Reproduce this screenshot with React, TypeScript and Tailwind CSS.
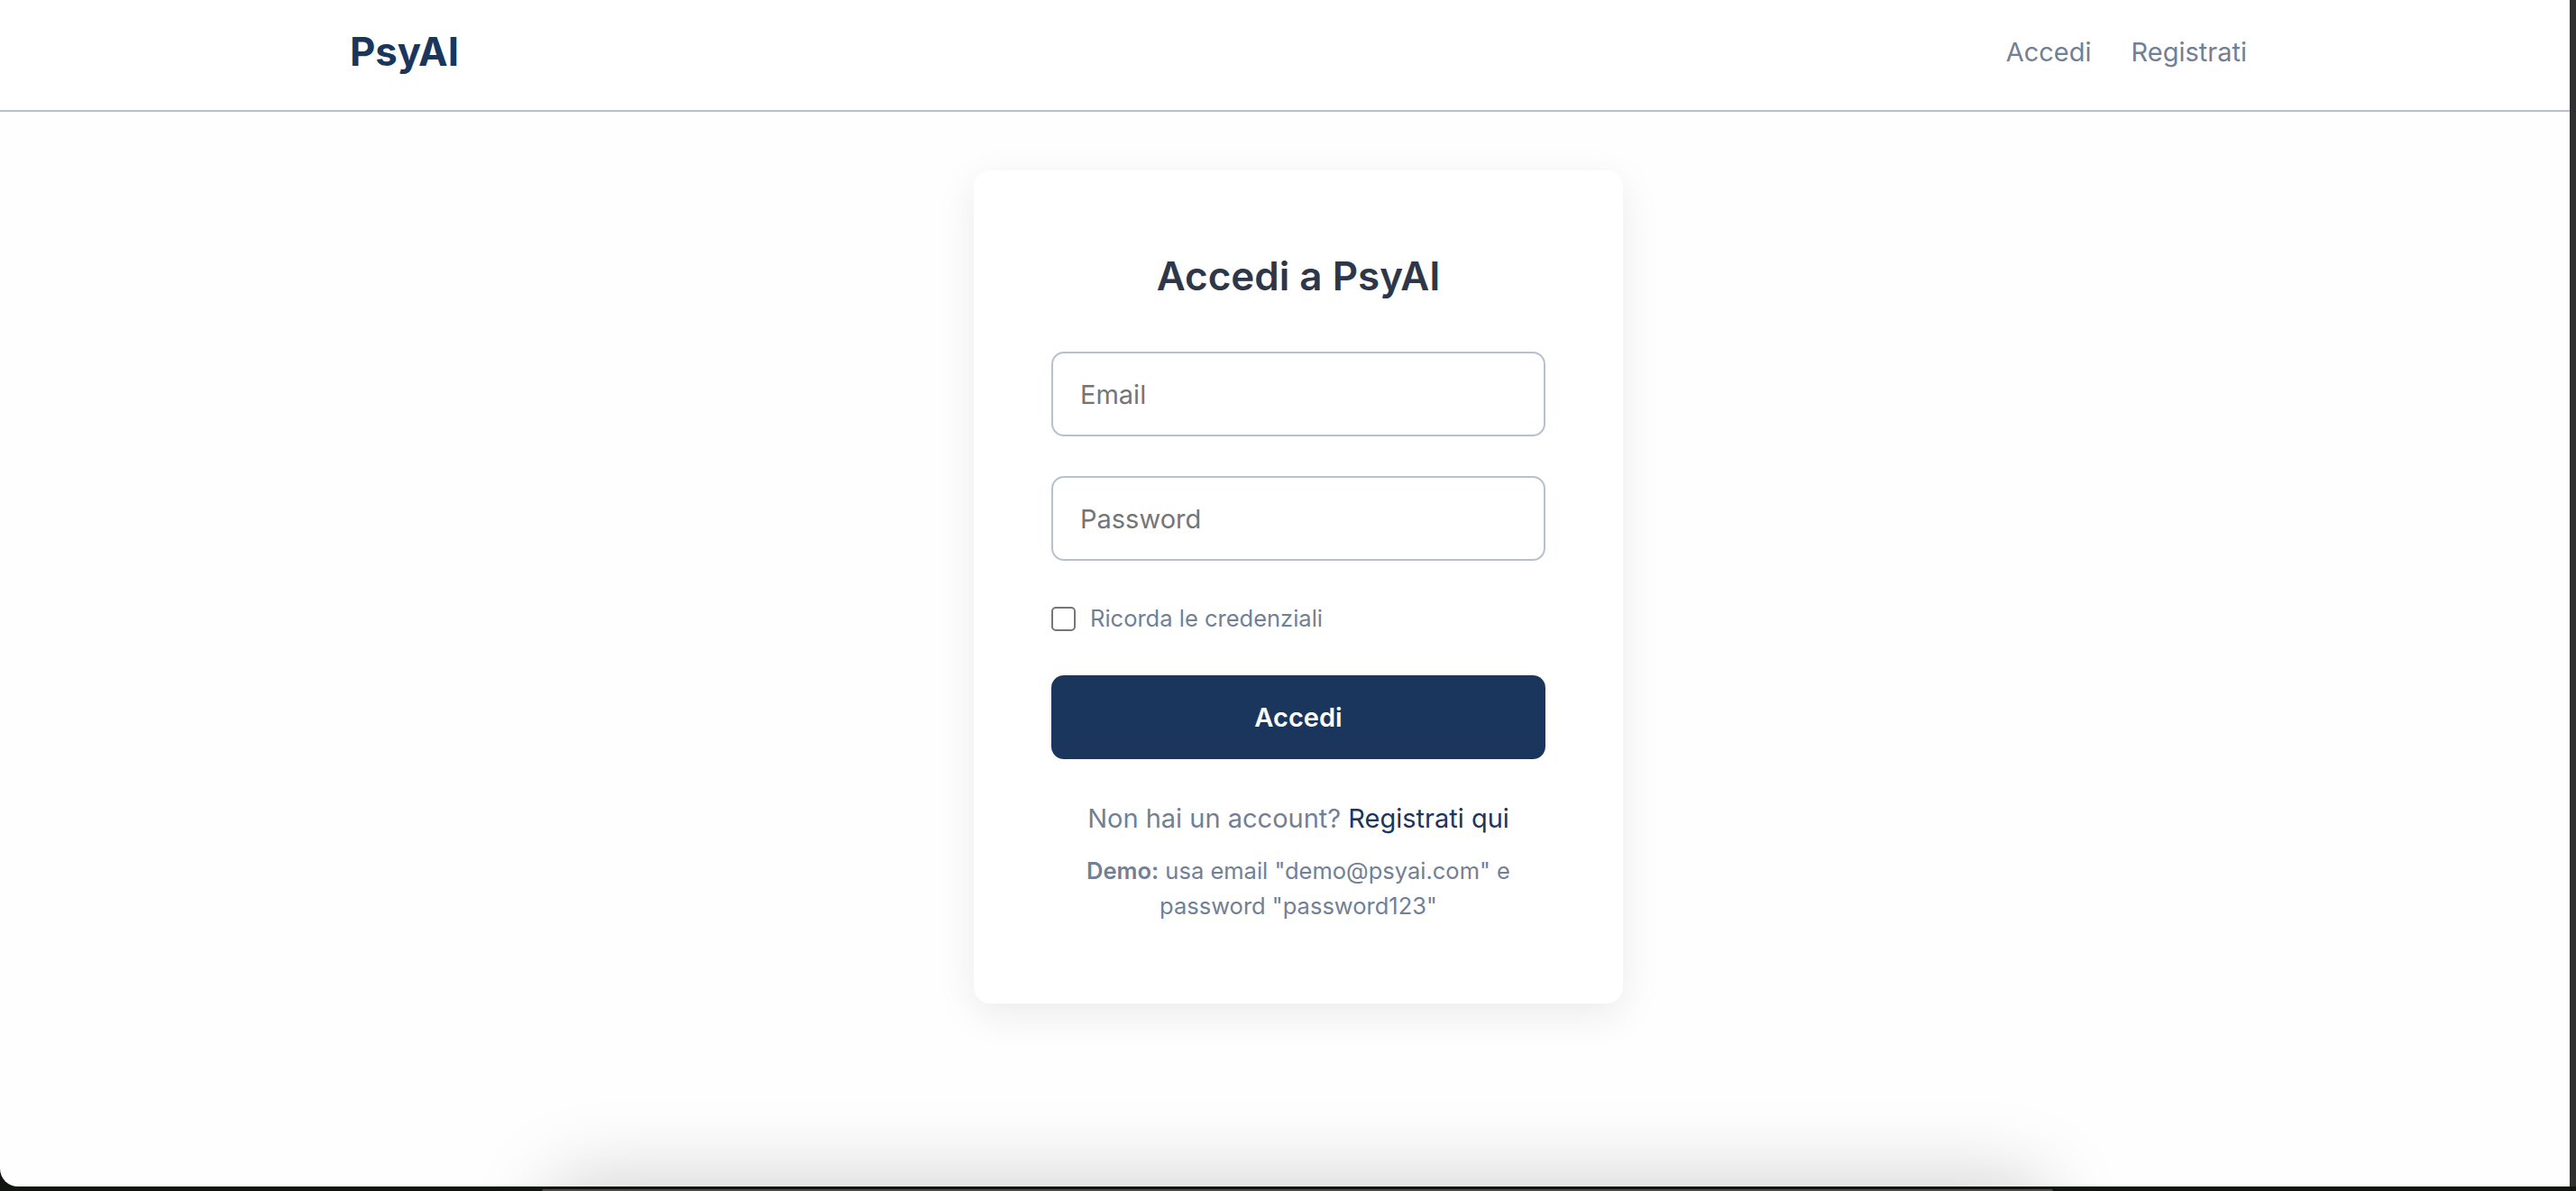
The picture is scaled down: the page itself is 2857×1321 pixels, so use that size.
import React from "react";

export default function App() {
  return (
    <div
      className="w-[2857px] h-[1321px] bg-[#121412] flex flex-col overflow-hidden"
      style={{ fontFamily: "Inter, 'Noto Sans', sans-serif" }}
    >
      <div className="flex h-[1316px]">
        <div className="relative flex-1 bg-[#fefefe] rounded-bl-[20px] overflow-hidden">
          {/* Header */}
          <header className="h-[124px] bg-white border-b-2 border-[#b6c1d0]">
            <div className="h-[122px] pl-[30px] pb-[7px] flex">
              <div className="mx-auto w-[2104px] flex items-center justify-between">
                <span className="text-[43.7px] leading-[58px] font-bold text-[#1a365d]">PsyAI</span>
                <nav className="flex items-center gap-[44px] text-[29px] leading-[44px] text-[#718096]">
                  <a>Accedi</a>
                  <a>Registrati</a>
                </nav>
              </div>
            </div>
          </header>

          {/* Main */}
          <main className="pl-[30px] pt-[65px] flex">
            <div className="mx-auto w-[720px] bg-white rounded-[18px] shadow-[0_12px_45px_rgba(0,0,0,0.08)] px-[86px] pt-[88px] pb-[89px] flex flex-col">
              <h1 className="text-center text-[44px] leading-[58px] font-semibold text-[#2d3748]">
                Accedi a PsyAI
              </h1>
              <input
                className="mt-[55px] h-[94px] w-full rounded-[14px] border-2 border-[#b6c1d0] bg-white px-[30px] text-[29px] text-[#2d3748] placeholder:text-[#757575] outline-none"
                placeholder="Email"
                type="email"
              />
              <input
                className="mt-[44px] h-[94px] w-full rounded-[14px] border-2 border-[#b6c1d0] bg-white px-[30px] text-[29px] text-[#2d3748] placeholder:text-[#757575] outline-none"
                placeholder="Password"
                type="password"
              />
              <label className="mt-[46px] h-[36px] flex items-center gap-[16px]">
                <input
                  type="checkbox"
                  className="appearance-none w-[27px] h-[27px] border-2 border-[#767676] rounded-[5px] bg-white"
                />
                <span className="text-[25.5px] leading-[36px] text-[#718096]">Ricorda le credenziali</span>
              </label>
              <button className="mt-[45px] h-[93px] w-full rounded-[14px] bg-[#1b365d] text-white text-[29px] font-semibold flex items-center justify-center">
                Accedi
              </button>
              <p className="mt-[44px] text-center text-[29px] leading-[44px] text-[#718096]">
                Non hai un account? <a className="text-[#1a365d]">Registrati qui</a>
              </p>
              <p className="mt-[16px] text-center text-[25.5px] leading-[39px] text-[#718096]">
                <span className="font-semibold">Demo:</span> usa email "demo@psyai.com" e password "password123"
              </p>
            </div>
          </main>

          {/* shadow cast from below */}
          <div className="pointer-events-none absolute left-[600px] w-[1680px] top-[1300px] h-[120px] bg-black/15 blur-[40px] rounded-[60px]" />
        </div>
        <div className="w-[7px] bg-[#303030]" />
      </div>
      <div className="h-[5px] flex items-end">
        <div className="ml-[601px] w-[1676px] h-[2px] bg-[#4a4a48] rounded-t-[2px]" />
      </div>
    </div>
  );
}
